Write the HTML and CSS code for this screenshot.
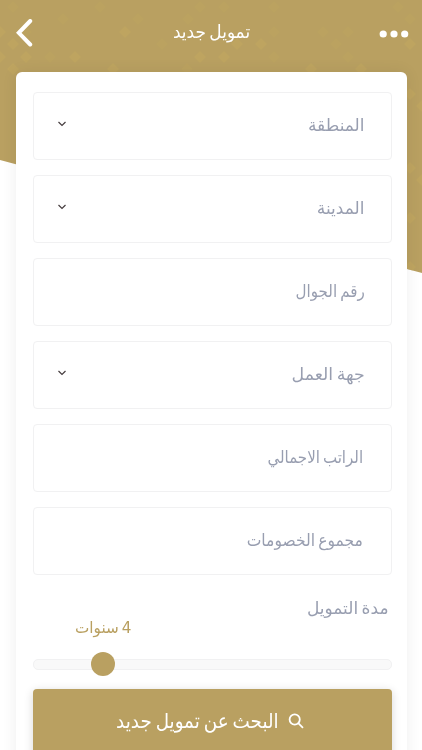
FILE: index.html
```html
<!DOCTYPE html>
<html lang="ar" dir="rtl">
<head>
  <meta charset="UTF-8" />
  <meta name="viewport" content="width=device-width, initial-scale=1.0"/>
  <title>تمويل جديد</title>
  <link rel="stylesheet" href="styles.css">
</head>
<body>
  <svg class="backdrop" viewBox="0 0 422 280">
    <defs>
      <clipPath id="slope"><path d="M0 0H422V273L0 160Z"/></clipPath>
      <path id="d" d="M0 -6L6 0L0 6L-6 0Z"/>
    </defs>
    <g clip-path="url(#slope)">
      <rect class="gold" width="422" height="280"/>
      <g class="diamonds">
        <use href="#d" x="0" y="32"/><use href="#d" x="0" y="57"/><use href="#d" x="13" y="44"/>
        <use href="#d" x="26" y="57"/><use href="#d" x="13" y="69"/><use href="#d" x="75" y="57"/>
        <use href="#d" x="125" y="32"/><use href="#d" x="113" y="69"/><use href="#d" x="200" y="57"/>
        <use href="#d" x="224" y="57"/><use href="#d" x="237" y="44"/><use href="#d" x="261" y="44"/>
        <use href="#d" x="311" y="69"/><use href="#d" x="361" y="69"/>
        <use href="#d" x="410" y="44"/><use href="#d" x="410" y="94"/><use href="#d" x="422" y="106"/>
        <use href="#d" x="410" y="168"/><use href="#d" x="422" y="180"/><use href="#d" x="410" y="218"/><use href="#d" x="410" y="267"/>
      </g>
      <g class="diamonds faint">
        <use href="#d" x="13" y="7"/><use href="#d" x="63" y="19"/><use href="#d" x="100" y="7"/>
        <use href="#d" x="26" y="32"/><use href="#d" x="50" y="57"/><use href="#d" x="138" y="19"/>
        <use href="#d" x="188" y="19"/><use href="#d" x="162" y="44"/><use href="#d" x="187" y="69"/>
        <use href="#d" x="274" y="7"/><use href="#d" x="200" y="7"/>
        <use href="#d" x="274" y="32"/><use href="#d" x="274" y="57"/><use href="#d" x="323" y="32"/>
        <use href="#d" x="348" y="32"/><use href="#d" x="336" y="44"/><use href="#d" x="348" y="57"/>
        <use href="#d" x="224" y="7"/><use href="#d" x="398" y="7"/><use href="#d" x="410" y="19"/>
      </g>
    </g>
  </svg>

  <header class="topbar">
    <svg class="dots" viewBox="0 0 30 8"><circle cx="4.2" cy="4" r="3.6"/><circle cx="15" cy="4" r="3.6"/><circle cx="25.7" cy="4" r="3.6"/></svg>
    <h1>تمويل جديد</h1>
    <svg class="back" viewBox="0 0 18 28"><path d="M14.2 2L2.8 13.8L14.2 25.5"/></svg>
  </header>

  <form class="card">
    <div class="field"><label>المنطقة</label><svg class="chevron" viewBox="0 0 10 6"><path d="M1.5 1L5 4.5L8.5 1"/></svg></div>
    <div class="field"><label>المدينة</label><svg class="chevron" viewBox="0 0 10 6"><path d="M1.5 1L5 4.5L8.5 1"/></svg></div>
    <div class="field"><label class="phone">رقم الجوال</label></div>
    <div class="field"><label class="work">جهة العمل</label><svg class="chevron" viewBox="0 0 10 6"><path d="M1.5 1L5 4.5L8.5 1"/></svg></div>
    <div class="field"><label class="salary">الراتب الاجمالي</label></div>
    <div class="field"><label class="deductions">مجموع الخصومات</label></div>

    <div class="duration">
      <label>مدة التمويل</label>
      <output>4 سنوات</output>
      <div class="track"><span class="thumb"></span></div>
    </div>

    <button type="button" class="submit">
      <svg class="search" viewBox="0 0 16 16"><circle cx="6.7" cy="6.5" r="5.1"/><path d="M10.5 10.3L14.5 14.3"/></svg>
      <span class="submit-text">البحث عن تمويل جديد</span>
    </button>
  </form>
</body>
</html>
```
FILE: styles.css
```css
* { box-sizing: border-box; }
body { margin: 0; height: 750px; overflow: hidden; background: #fff; font-family: "DejaVu Sans", "Noto Sans", sans-serif; position: relative; }
.backdrop { position: absolute; top: 0; left: 0; width: 422px; height: 280px; z-index: -1; }
.gold { fill: #b9a061; }
.diamonds { fill: #c2a761; opacity: .65; }
.faint { opacity: .25; }

.topbar { height: 72px; padding: 0 13px 7px 16px; display: flex; align-items: center; justify-content: space-between; }
.topbar h1 { margin: 0; font-size: 18px; line-height: 24px; font-weight: normal; color: #fff; word-spacing: -2px; transform: translate(3px, -1px) scaleX(.94); transform-origin: right; }
.dots { width: 30px; height: 8px; margin-top: 2px; fill: #fff; }
.back { width: 18px; height: 28px; fill: none; stroke: #fff; stroke-width: 4; stroke-linecap: round; stroke-linejoin: miter; }

.card { width: 391px; height: 700px; margin: 0 15px 0 16px; padding: 20px 15.5px 0 16.5px; background: #fff; border-radius: 6px; box-shadow: 0 0 16px rgba(0, 0, 0, .07); }
.field { height: 68px; margin-bottom: 15.1px; padding: 0 26px 2px 23px; border: 1px solid #f1f1f2; border-radius: 4px; display: flex; align-items: center; justify-content: space-between; }
label { font-size: 17px; line-height: 24px; color: #989eb0; white-space: nowrap; word-spacing: -2px; transform-origin: right; }
.phone { transform: scaleX(.89); }
.work { transform: scaleX(1.02); }
.salary { margin-right: 1px; transform: scaleX(.885); }
.deductions { margin-right: 2px; transform: scaleX(.916); }
.chevron { width: 10px; height: 6px; margin-bottom: 2px; fill: none; stroke: #463d3f; stroke-width: 1.2; }

.duration { height: 98px; padding-top: 5px; }
.duration label { display: block; width: max-content; margin-right: 3px; }
output { display: block; width: max-content; margin: -4px auto 0 42px; font-size: 16px; line-height: 24px; color: #b9a061; word-spacing: -2px; transform: scaleX(.95); transform-origin: left; }
.track { height: 11px; margin-top: 19px; background: #f9f9f9; border: 1px solid #f1f1f2; border-radius: 5px; display: flex; align-items: center; justify-content: flex-end; padding-left: 57px; }
.thumb { width: 24px; height: 24px; border-radius: 50%; background: #b9a061; flex: none; }

.submit { width: 100%; height: 72px; padding: 0 88px 7px 0; border: 0; border-radius: 4px; background: #b9a061; color: #fff; box-shadow: 0 2px 10px rgba(0, 0, 0, .16); font: 20px "DejaVu Sans", "Noto Sans", sans-serif; display: flex; align-items: center; justify-content: flex-start; gap: 9px; }
.submit-text { white-space: nowrap; word-spacing: -2px; transform: scaleX(.915); transform-origin: right; }
.search { width: 16px; height: 16px; flex: none; fill: none; stroke: #fff; stroke-width: 1.8; stroke-linecap: round; }
```
